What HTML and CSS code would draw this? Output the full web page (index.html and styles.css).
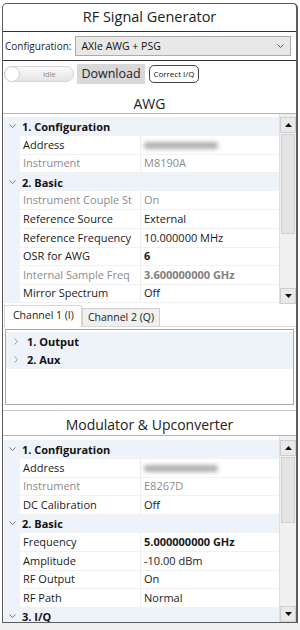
FILE: index.html
```html
<!DOCTYPE html>
<html>
<head>
<meta charset="utf-8">
<link rel="stylesheet" href="styles.css">
</head>
<body>
<div class="frame">
  <div class="title">RF Signal Generator</div>
  <div class="config-row">
    <span class="config-label">Configuration:</span>
    <div class="combo">
      <span>AXIe AWG + PSG</span>
      <svg class="combo-chev" width="7" height="5" viewBox="0 0 7 5"><polyline points="0.5,0.5 3.5,3.5 6.5,0.5" fill="none" stroke="#555" stroke-width="1"/></svg>
    </div>
  </div>
  <div class="action-row">
    <div class="toggle"><span class="knob"></span><span class="toggle-text">Idle</span></div>
    <div class="btn-download">Download</div>
    <div class="btn-correct">Correct I/Q</div>
  </div>
  <div class="heading">AWG</div>
  <div class="pgrid grid-awg">
    <div class="rows">
      <div class="cat"><svg class="chev" width="7" height="5" viewBox="0 0 7 5"><polyline points="0.5,0.5 3.5,3.5 6.5,0.5" fill="none" stroke="#777" stroke-width="1"/></svg><span>1. Configuration</span></div>
      <div class="prop"><span class="gut"></span><span class="lab">Address</span><span class="val"><span class="blur"></span></span></div>
      <div class="prop ro"><span class="gut"></span><span class="lab">Instrument</span><span class="val">M8190A</span></div>
      <div class="cat"><svg class="chev" width="7" height="5" viewBox="0 0 7 5"><polyline points="0.5,0.5 3.5,3.5 6.5,0.5" fill="none" stroke="#777" stroke-width="1"/></svg><span>2. Basic</span></div>
      <div class="prop ro"><span class="gut"></span><span class="lab">Instrument Couple St</span><span class="val">On</span></div>
      <div class="prop"><span class="gut"></span><span class="lab">Reference Source</span><span class="val">External</span></div>
      <div class="prop"><span class="gut"></span><span class="lab">Reference Frequency</span><span class="val">10.000000 MHz</span></div>
      <div class="prop"><span class="gut"></span><span class="lab">OSR for AWG</span><span class="val b">6</span></div>
      <div class="prop ro"><span class="gut"></span><span class="lab">Internal Sample Freq</span><span class="val b">3.600000000 GHz</span></div>
      <div class="prop"><span class="gut"></span><span class="lab">Mirror Spectrum</span><span class="val">Off</span></div>
    </div>
    <div class="sbar">
      <div class="sbtn"><svg width="7" height="4" viewBox="0 0 7 4"><polygon points="0,4 3.5,0 7,4" fill="#111"/></svg></div>
      <div class="strack"><div class="thumb thumb-awg"></div></div>
      <div class="sbtn"><svg width="7" height="4" viewBox="0 0 7 4"><polygon points="0,0 3.5,4 7,0" fill="#111"/></svg></div>
    </div>
  </div>
  <div class="tabs">
    <div class="tab sel">Channel 1 (I)</div>
    <div class="tab">Channel 2 (Q)</div>
  </div>
  <div class="tabpanel">
    <div class="tree">
      <div class="trow"><svg class="tchev" width="4" height="7" viewBox="0 0 4 7"><polyline points="0.5,0.5 3.5,3.5 0.5,6.5" fill="none" stroke="#999" stroke-width="1"/></svg><span>1. Output</span></div>
      <div class="trow"><svg class="tchev" width="4" height="7" viewBox="0 0 4 7"><polyline points="0.5,0.5 3.5,3.5 0.5,6.5" fill="none" stroke="#999" stroke-width="1"/></svg><span>2. Aux</span></div>
    </div>
  </div>
  <div class="heading heading2">Modulator &amp; Upconverter</div>
  <div class="pgrid grid-mod">
    <div class="rows">
      <div class="cat"><svg class="chev" width="7" height="5" viewBox="0 0 7 5"><polyline points="0.5,0.5 3.5,3.5 6.5,0.5" fill="none" stroke="#777" stroke-width="1"/></svg><span>1. Configuration</span></div>
      <div class="prop"><span class="gut"></span><span class="lab">Address</span><span class="val"><span class="blur"></span></span></div>
      <div class="prop ro"><span class="gut"></span><span class="lab">Instrument</span><span class="val">E8267D</span></div>
      <div class="prop"><span class="gut"></span><span class="lab">DC Calibration</span><span class="val">Off</span></div>
      <div class="cat"><svg class="chev" width="7" height="5" viewBox="0 0 7 5"><polyline points="0.5,0.5 3.5,3.5 6.5,0.5" fill="none" stroke="#777" stroke-width="1"/></svg><span>2. Basic</span></div>
      <div class="prop"><span class="gut"></span><span class="lab">Frequency</span><span class="val b">5.000000000 GHz</span></div>
      <div class="prop"><span class="gut"></span><span class="lab">Amplitude</span><span class="val">-10.00 dBm</span></div>
      <div class="prop"><span class="gut"></span><span class="lab">RF Output</span><span class="val">On</span></div>
      <div class="prop"><span class="gut"></span><span class="lab">RF Path</span><span class="val">Normal</span></div>
      <div class="cat"><svg class="chev" width="7" height="5" viewBox="0 0 7 5"><polyline points="0.5,0.5 3.5,3.5 6.5,0.5" fill="none" stroke="#777" stroke-width="1"/></svg><span>3. I/Q</span></div>
    </div>
    <div class="sbar">
      <div class="sbtn"><svg width="7" height="4" viewBox="0 0 7 4"><polygon points="0,4 3.5,0 7,4" fill="#111"/></svg></div>
      <div class="strack"><div class="thumb thumb-mod"></div></div>
      <div class="sbtn"><svg width="7" height="4" viewBox="0 0 7 4"><polygon points="0,0 3.5,4 7,0" fill="#111"/></svg></div>
    </div>
  </div>
</div>
<div class="footer"></div>
</body>
</html>
```
FILE: styles.css
```css
html, body {
  margin: 0;
  padding: 0;
  background: #ffffff;
  font-family: "Open Sans", "Noto Sans", sans-serif;
  color: #1a1a1a;
}
.frame {
  margin: 3px 0 0 2px;
  width: 293px;
  height: 618px;
  border: 1px solid #5c5c5c;
  border-right: 2px solid #5c5c5c;
  border-radius: 5px 5px 0 0;
  background: #fff;
  display: flex;
  flex-direction: column;
  overflow: hidden;
}
.footer {
  height: 8px;
  background: #f0f0f0;
}
.title {
  height: 27px;
  flex: none;
  text-align: center;
  font-size: 14.5px;
  line-height: 25px;
  color: #222;
}
.config-row {
  flex: none;
  height: 28px;
  border-top: 1px solid #333;
  border-bottom: 1px solid #333;
  display: flex;
  align-items: center;
  gap: 4px;
  padding-left: 2px;
}
.config-label {
  font-size: 10px;
  color: #222;
}
.combo {
  width: 216px;
  height: 20px;
  border: 1px solid #acacac;
  background: #e8e8e8;
  display: flex;
  align-items: center;
  justify-content: space-between;
  padding: 0 6px 0 5px;
  box-sizing: border-box;
  font-size: 10.5px;
  color: #111;
}
.combo-chev { margin-top: 1px; }
.action-row {
  flex: none;
  height: 25px;
  display: flex;
  align-items: center;
  padding-left: 1px;
}
.toggle {
  position: relative;
  width: 70px;
  height: 16px;
  box-sizing: border-box;
  border: 1px solid #d4d4d4;
  border-radius: 8px;
  background: linear-gradient(#fbfbfb, #e4e4e4);
  display: flex;
  align-items: center;
}
.knob {
  position: absolute;
  left: -1px;
  top: -1px;
  width: 16px;
  height: 16px;
  box-sizing: border-box;
  border-radius: 50%;
  border: 1px solid #d0d0d0;
  background: #fff;
}
.toggle-text {
  margin-left: 38px;
  font-size: 7.5px;
  color: #8a8a8a;
}
.btn-download {
  margin-left: 3px;
  width: 68px;
  height: 20px;
  background: #d8d8d8;
  font-size: 12.5px;
  line-height: 20px;
  text-align: center;
  color: #222;
}
.btn-correct {
  margin-left: 4px;
  width: 50px;
  height: 18px;
  box-sizing: border-box;
  border: 1px solid #444;
  border-radius: 5px;
  font-size: 8px;
  line-height: 16px;
  text-align: center;
  color: #111;
  white-space: nowrap;
}
.heading {
  flex: none;
  height: 27px;
  text-align: center;
  font-size: 14px;
  line-height: 20px;
  padding-top: 8px;
  box-sizing: border-box;
  color: #222;
}
.heading2 {
  height: 25px;
  padding-top: 4px;
  border-top: 1px solid #c8c8c8;
}
.pgrid {
  flex: none;
  display: flex;
  border-top: 1px solid #b4b4b4;
  overflow: hidden;
}
.grid-awg { height: 190px; }
.grid-mod { flex: 1; }
.rows {
  flex: 1;
  padding-top: 3px;
  font-size: 11px;
  overflow: hidden;
}
.grid-mod .rows { padding-top: 4px; }
.cat {
  height: 18.6px;
  display: flex;
  align-items: center;
  background: #eef3f9;
  font-weight: bold;
  color: #111;
}
.chev { margin-left: 6px; margin-right: 6px; flex: none; }
.prop {
  height: 18.6px;
  display: grid;
  grid-template-columns: 17px 121px 1fr;
}
.gut { background: #eef3f9; }
.lab {
  padding-left: 3px;
  border-right: 1px solid #eeeeee;
  border-bottom: 1px solid #f1f1f1;
  white-space: nowrap;
  overflow: hidden;
  line-height: 18px;
  color: #1a1a1a;
}
.val {
  padding-left: 3px;
  border-bottom: 1px solid #f1f1f1;
  line-height: 18px;
  white-space: nowrap;
  color: #1a1a1a;
}
.ro .lab, .ro .val { color: #8c8c8c; }
.val.b { font-weight: bold; }
.ro .val.b { color: #808080; }
.blur {
  display: inline-block;
  width: 74px;
  height: 7px;
  margin-top: 6px;
  vertical-align: top;
  background: #b0b0b0;
  filter: blur(2px);
  border-radius: 3px;
}
.sbar {
  flex: none;
  width: 16px;
  display: flex;
  flex-direction: column;
  padding-top: 3px;
  background: #f0f0f0;
  border-left: 1px solid #e0e0e0;
}
.grid-mod .sbar { padding-top: 4px; }
.sbtn {
  height: 16px;
  flex: none;
  display: flex;
  align-items: center;
  justify-content: center;
  background: #e9e9e9;
  border: 1px solid #cfcfcf;
  box-sizing: border-box;
}
.strack {
  flex: 1;
  background: #f0f0f0;
}
.thumb {
  margin: 1px 1px 0 1px;
  background: #e4e4e4;
  border: 1px solid #d0d0d0;
  box-sizing: border-box;
}
.thumb-awg { height: 100px; }
.thumb-mod { height: 66px; }
.tabs {
  flex: none;
  height: 22px;
  display: flex;
  align-items: flex-end;
  padding-left: 1px;
  border-bottom: 1px solid #d9d9d9;
}
.tab {
  height: 18px;
  box-sizing: border-box;
  padding: 0 5px;
  font-size: 10.5px;
  line-height: 16px;
  background: #f0f0f0;
  border: 1px solid #cfcfcf;
  border-bottom: none;
  color: #222;
}
.tab.sel {
  background: #fff;
  line-height: 19px;
  padding: 0 7px 0 8px;
  border-color: #d9d9d9;
  margin-bottom: -1px;
  height: 22px;
}
.tabpanel {
  flex: none;
  height: 83px;
  padding: 2px 2px 0 2px;
  box-sizing: border-box;
}
.tree {
  height: 76px;
  border: 1px solid #a8a8a8;
  box-sizing: border-box;
  padding-top: 2px;
  font-size: 11px;
}
.trow {
  height: 18.6px;
  display: flex;
  align-items: center;
  background: #eef3f9;
  font-weight: bold;
  color: #111;
}
.tchev { margin-left: 8px; margin-right: 9px; flex: none; }
```
